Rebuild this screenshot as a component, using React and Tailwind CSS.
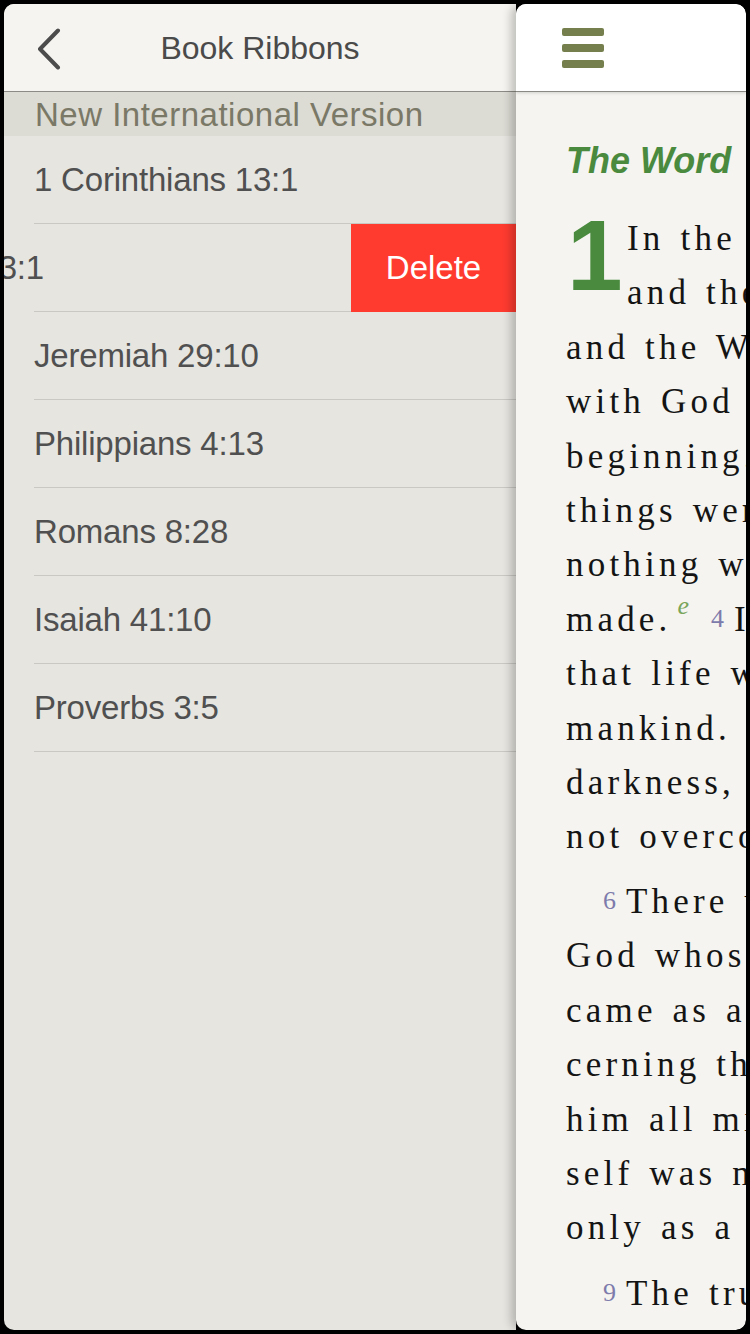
import React from 'react'

const RIBBONS = ['Jeremiah 29:10', 'Philippians 4:13', 'Romans 8:28', 'Isaiah 41:10', 'Proverbs 3:5']

const SANS = 'font-["Liberation_Sans",Arial,sans-serif]'
const SERIF = 'font-["Liberation_Serif","Times_New_Roman",serif]'

function Num({ children, className = '' }) {
  return (
    <span className={`relative -top-[4px] text-[26px] leading-none tracking-normal text-[#7d7bab] ${className}`}>
      {children}
    </span>
  )
}

function Line({ children, className = '' }) {
  return <div className={`whitespace-nowrap ${className}`}>{children}</div>
}

function BackChevron() {
  return (
    <svg width="26" height="42" viewBox="0 0 26 42" fill="none">
      <polyline points="22,2.5 4,21 22,39.5" stroke="#4c4c4c" strokeWidth="4" strokeLinecap="round" strokeLinejoin="round" />
    </svg>
  )
}

function Hamburger() {
  return (
    <div className="flex flex-col gap-2 w-[42px]">
      <div className="h-2 rounded-[2px] bg-[#757f4d]" />
      <div className="h-2 rounded-[2px] bg-[#757f4d]" />
      <div className="h-2 rounded-[2px] bg-[#757f4d]" />
    </div>
  )
}

export default function App() {
  return (
    <div className="w-[750px] h-[1334px] bg-black p-1">
      <div className="h-full flex rounded-[10px] overflow-hidden">

        {/* ── Ribbons panel ── */}
        <div className={`w-[512px] shrink-0 flex flex-col bg-[#e6e5e0] ${SANS}`}>
          <div className="relative h-[88px] shrink-0 flex items-center justify-center bg-[#f5f4f0] border-b border-[#8c8b85]">
            <div className="absolute left-[32px] top-[24px]">
              <BackChevron />
            </div>
            <span className="text-[32px] text-[#4a4a4a]">Book Ribbons</span>
          </div>

          <div className="h-[44px] shrink-0 flex items-center pl-[31px] pt-[2px] bg-[#dcdbd4] text-[33px] tracking-[0.5px] text-[#7a7866]">
            New International Version
          </div>

          <div className="ml-[30px] h-[88px] flex items-center border-b border-[#c9c8c3] text-[33px] tracking-[-0.2px] text-[#505050]">
            1 Corinthians 13:1
          </div>

          {/* swiped row */}
          <div className="h-[88px] flex">
            <div className="flex-1 flex flex-col">
              <div className="flex-1 flex items-center">
                <div className="w-[40px] flex justify-end overflow-hidden whitespace-nowrap text-[33px] tracking-[-0.2px] text-[#505050]">
                  Psalm 23:1
                </div>
              </div>
              <div className="ml-[30px] h-px bg-[#c9c8c3]" />
            </div>
            <div className="w-[165px] flex items-center justify-center bg-[#ff3b30] text-[33px] text-white">
              Delete
            </div>
          </div>

          {RIBBONS.map(r => (
            <div key={r} className="ml-[30px] h-[88px] flex items-center border-b border-[#c9c8c3] text-[33px] tracking-[-0.2px] text-[#505050]">
              {r}
            </div>
          ))}
        </div>

        {/* ── Reader panel ── */}
        <div className="relative z-10 flex-1 flex flex-col rounded-[10px] overflow-hidden bg-[#f5f4f0] shadow-[-5px_0_10px_rgba(0,0,0,0.22)]">
          <div className="h-[88px] shrink-0 flex items-center pl-[46px] bg-white border-b border-[#8a8984] shadow-[0_1px_3px_rgba(0,0,0,0.15)]">
            <Hamburger />
          </div>

          <div className="pl-[50px]">
            <div className={`mt-[47px] leading-[44px] text-[36px] font-bold italic text-[#4a8a3f] whitespace-nowrap ${SANS}`}>
              The Word
            </div>

            <div className={`mt-[29px] text-[35px] leading-[54.4px] tracking-[4.2px] [word-spacing:3px] text-[#141414] ${SERIF}`}>
              <div className="flex">
                <div className={`w-[61px] shrink-0 pl-[1px] text-[100px] leading-[87px] font-bold tracking-normal text-[#4a8a3f] ${SANS}`}>
                  1
                </div>
                <div>
                  <Line>In the beginning was the Word,</Line>
                  <Line>and the Word was with God,</Line>
                </div>
              </div>
              <Line>and the Word was God. <Num className="mr-[10px]">2</Num>He was</Line>
              <Line>with God in the</Line>
              <Line>beginning. <Num className="mr-[10px]">3</Num>Through him all</Line>
              <Line>things were made; without him</Line>
              <Line>nothing was made that has been</Line>
              <Line>
                made.
                <span className="relative -top-[17px] ml-[6px] text-[26px] leading-none italic tracking-normal text-[#7aa55a]">e</span>
                <Num className="ml-[22px] mr-[10px]">4</Num>In him was life, and
              </Line>
              <Line>that life was the light of all</Line>
              <Line>mankind. <Num className="mr-[10px]">5</Num>The light shines in the</Line>
              <Line>darkness, and the darkness has</Line>
              <Line>not overcome it.</Line>

              <Line className="mt-[10px] pl-[37px]"><Num className="mr-[10px]">6</Num>There was a man sent from</Line>
              <Line>God whose name was John. <Num className="mr-[10px]">7</Num>He</Line>
              <Line>came as a witness to testify con-</Line>
              <Line>cerning that light, so that through</Line>
              <Line>him all might believe. <Num className="mr-[10px]">8</Num>He him-</Line>
              <Line>self was not the light; he came</Line>
              <Line>only as a witness to the light.</Line>

              <Line className="mt-[11px] pl-[37px]"><Num className="mr-[10px]">9</Num>The true light that gives</Line>
            </div>
          </div>
        </div>
      </div>
    </div>
  )
}
